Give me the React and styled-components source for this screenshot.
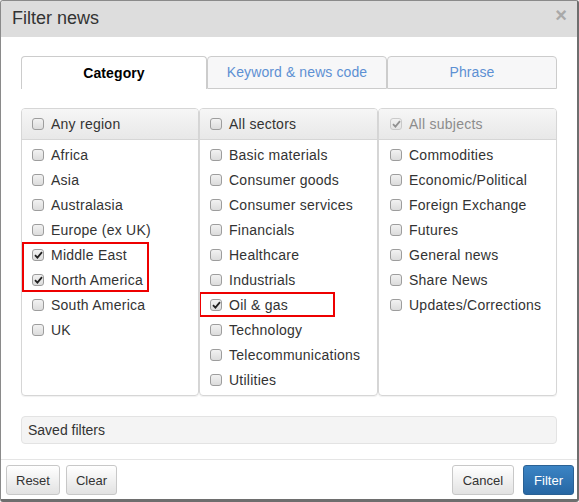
import React from 'react';
import styled, { createGlobalStyle } from 'styled-components';

const GlobalStyle = createGlobalStyle`
  html, body { margin: 0; padding: 0; background: #fff; }
  body { font-family: "Liberation Sans", Arial, sans-serif; font-size: 14px; color: #333; }
  * { box-sizing: border-box; }
`;

const regions = [
  { label: 'Africa' },
  { label: 'Asia' },
  { label: 'Australasia' },
  { label: 'Europe (ex UK)' },
  { label: 'Middle East', checked: true, group: 'a' },
  { label: 'North America', checked: true, group: 'a' },
  { label: 'South America' },
  { label: 'UK' },
];

const sectors = [
  { label: 'Basic materials' },
  { label: 'Consumer goods' },
  { label: 'Consumer services' },
  { label: 'Financials' },
  { label: 'Healthcare' },
  { label: 'Industrials' },
  { label: 'Oil & gas', checked: true, group: 'b' },
  { label: 'Technology' },
  { label: 'Telecommunications' },
  { label: 'Utilities' },
];

const subjects = [
  { label: 'Commodities' },
  { label: 'Economic/Political' },
  { label: 'Foreign Exchange' },
  { label: 'Futures' },
  { label: 'General news' },
  { label: 'Share News' },
  { label: 'Updates/Corrections' },
];

const Dialog = styled.div`
  width: 579px;
  height: 502px;
  border: 1px solid #8a8a8a;
  border-right: 2px solid #6e6e6e;
  border-bottom: 3px solid #6e6e6e;
  border-radius: 3px;
  display: flex;
  flex-direction: column;
  overflow: hidden;
  background: #fff;
`;

const Header = styled.div`
  height: 36px;
  background: #dddddd;
  display: flex;
  align-items: center;
  justify-content: space-between;
  padding: 0 10px 2px 11px;
`;

const Title = styled.h4`
  margin: 0;
  font-size: 18px;
  font-weight: normal;
  color: #333;
`;

const Close = styled.span`
  font-size: 20px;
  font-weight: bold;
  color: #a9a9a9;
  line-height: 1;
  margin-top: -6px;
`;

const Body = styled.div`
  padding: 19px 20px 15px 20px;
`;

const Tabs = styled.div`
  display: grid;
  grid-template-columns: 186px 180px 1fr;
  height: 33px;
`;

const Tab = styled.div`
  display: flex;
  align-items: center;
  justify-content: center;
  border: 1px solid #ccc;
  border-bottom: ${p => (p.$active ? 'none' : '1px solid #ccc')};
  border-radius: 4px 4px 0 0;
  background: ${p => (p.$active ? '#fff' : '#f7f7f8')};
  color: ${p => (p.$active ? '#000' : '#5d90d3')};
  font-weight: ${p => (p.$active ? 'bold' : 'normal')};
  font-size: 14px;
  letter-spacing: 0.1px;
  padding-bottom: 1px;
`;

const Columns = styled.div`
  display: grid;
  grid-template-columns: 178px 179px 179px;
  margin-top: 19px;
`;

const Panel = styled.div`
  border: 1px solid #d6d6d6;
  border-radius: 4px;
  box-shadow: 0 1px 1px rgba(0, 0, 0, 0.06);
  height: 288px;
  overflow: hidden;
`;

const PanelHeader = styled.div`
  height: 31px;
  background: linear-gradient(#f6f6f6, #e8e8e8);
  border-bottom: 1px solid #d6d6d6;
  display: flex;
  align-items: center;
  padding-left: ${p => p.$pad || 10}px;
  letter-spacing: 0.25px;
  color: ${p => (p.$disabled ? '#8c8c8c' : '#333')};
`;

const List = styled.div`
  padding: 2px 0 2px;
`;

const Row = styled.label`
  display: flex;
  align-items: center;
  height: 25px;
  padding-left: ${p => p.$pad || 10}px;
  letter-spacing: 0.25px;
  color: #333;
`;

const Highlight = styled.div`
  width: ${p => p.$width}px;
  margin-left: ${p => p.$shift || 0}px;
  padding-left: ${p => -(p.$shift || 0)}px;
  box-shadow: inset 0 0 0 2px #ee0000;
  padding-top: 1px;
`;

const Box = styled.span`
  width: 12px;
  height: 12px;
  border: 1px solid #9d9d9d;
  border-radius: 3px;
  background: linear-gradient(#f2f2f2, #dcdcdc);
  margin-right: 7px;
  flex-shrink: 0;
  display: flex;
  align-items: center;
  justify-content: center;
  opacity: ${p => (p.$disabled ? 0.45 : 1)};
  svg { display: block; }
`;

const Saved = styled.div`
  margin-top: 20px;
  height: 28px;
  background: #f4f4f4;
  border: 1px solid #e3e3e3;
  border-radius: 4px;
  display: flex;
  align-items: center;
  padding-left: 6px;
  color: #333;
`;

const Footer = styled.div`
  border-top: 1px solid #e5e5e5;
  padding: 5px 3px 0 5px;
  display: flex;
  align-items: flex-start;
`;

const Button = styled.button`
  height: 30px;
  padding: 0 ${p => p.$px || 9}px;
  font-family: "Liberation Sans", Arial, sans-serif;
  font-size: 13px;
  border-radius: 3px;
  margin-left: ${p => p.$ml || 0}px;
  cursor: pointer;
  color: ${p => (p.$primary ? '#fff' : '#333')};
  border: 1px solid ${p => (p.$primary ? '#2a6194' : '#c8c8c8')};
  background: ${p =>
    p.$primary ? 'linear-gradient(#3b84c4, #2767a4)' : 'linear-gradient(#fff, #e2e2e2)'};
`;

const Spacer = styled.div`
  flex: 1;
`;

function Check({ checked, disabled }) {
  return (
    <Box $disabled={disabled}>
      {checked && (
        <svg width="9" height="8" viewBox="0 0 9 8">
          <path d="M1 4.2 L3.4 6.6 L8 1.2" fill="none" stroke="#222" strokeWidth="1.8" />
        </svg>
      )}
    </Box>
  );
}

function Items({ items, pad, marks }) {
  const out = [];
  let i = 0;
  while (i < items.length) {
    const it = items[i];
    if (it.group) {
      const grp = items.filter(x => x.group === it.group);
      const m = marks[it.group];
      out.push(
        <Highlight key={it.label} $width={m.width} $shift={m.shift}>
          {grp.map(g => (
            <Row key={g.label} $pad={pad} style={{ height: m.row }}>
              <Check checked={g.checked} />
              {g.label}
            </Row>
          ))}
        </Highlight>
      );
      i += grp.length;
    } else {
      out.push(
        <Row key={it.label} $pad={pad}>
          <Check checked={it.checked} />
          {it.label}
        </Row>
      );
      i += 1;
    }
  }
  return <List>{out}</List>;
}

export default function App() {
  return (
    <>
      <GlobalStyle />
      <Dialog>
        <Header>
          <Title>Filter news</Title>
          <Close>×</Close>
        </Header>
        <Body>
          <Tabs>
            <Tab $active>Category</Tab>
            <Tab>Keyword &amp; news code</Tab>
            <Tab>Phrase</Tab>
          </Tabs>
          <Columns>
            <Panel>
              <PanelHeader $pad={10}>
                <Check />
                Any region
              </PanelHeader>
              <Items items={regions} pad={10} marks={{ a: { width: 127, shift: 0, row: 24.5 } }} />
            </Panel>
            <Panel>
              <PanelHeader $pad={10}>
                <Check />
                All sectors
              </PanelHeader>
              <Items items={sectors} pad={10} marks={{ b: { width: 136, shift: -1, row: 24 } }} />
            </Panel>
            <Panel>
              <PanelHeader $pad={11} $disabled>
                <Check checked disabled />
                All subjects
              </PanelHeader>
              <Items items={subjects} pad={11} marks={{}} />
            </Panel>
          </Columns>
          <Saved>Saved filters</Saved>
        </Body>
        <Footer>
          <Button>Reset</Button>
          <Button $ml={6}>Clear</Button>
          <Spacer />
          <Button $px={10}>Cancel</Button>
          <Button $primary $ml={9} $px={10}>Filter</Button>
        </Footer>
      </Dialog>
    </>
  );
}
